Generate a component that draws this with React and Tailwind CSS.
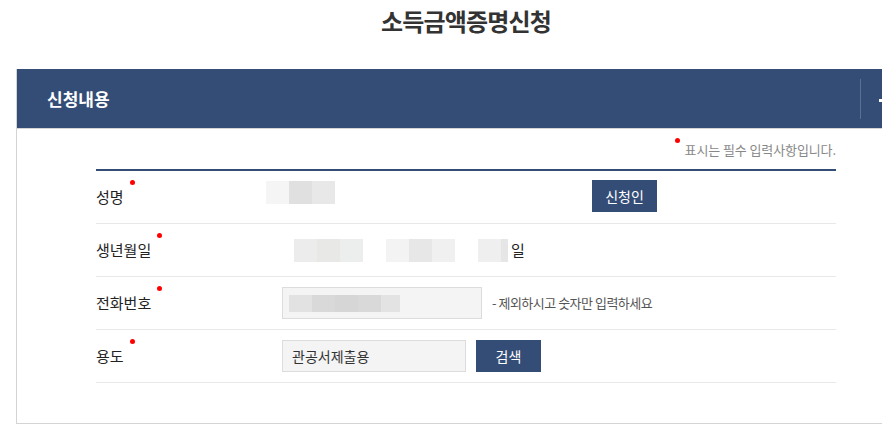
export default function App() {
  const font = { fontFamily: '"Noto Sans CJK KR", "Noto Sans", sans-serif' };

  const Dot = () => (
    <span className="absolute -right-[11px] -top-[6px] h-[5px] w-[5px] rounded-full bg-[#ff0000]" />
  );

  const Label = ({ children }) => (
    <div className="flex w-[170px] items-center text-[15px] text-[#222]">
      <span className="relative">
        {children}
        <Dot />
      </span>
    </div>
  );

  const Blur = ({ colors }) => (
    <div className="flex h-[23px]">
      {colors.map((c, i) => (
        <div key={i} className="h-[23px] w-[23px]" style={{ backgroundColor: c }} />
      ))}
    </div>
  );

  return (
    <div className="h-[430px] w-[882px] overflow-hidden bg-white" style={font}>
      <div className="ml-[16px] w-[900px]">
        <h1 className="pt-[4px] text-center text-[24px] font-bold leading-[34px] tracking-[-0.8px] text-[#333]">
          소득금액증명신청
        </h1>

        <div className="mt-[31px] border-b border-l border-[#d4d4d4]">
          <div className="flex h-[60px] items-center border-b border-[#d4d4d4] bg-[#344d77]">
            <h2 className="flex-1 pl-[30px] text-[17px] font-bold text-white">신청내용</h2>
            <div className="flex h-[40px] w-[56px] items-center border-l border-[#5a6f93] pl-[18px]">
              <span className="mt-[4px] h-[3px] w-[3px] bg-white" />
            </div>
          </div>

          <div className="pb-[40px] pl-[79px] pr-[80px]">
            <p className="flex h-[40px] items-center justify-end pt-[1px] text-[13px] tracking-[-0.1px] text-[#888]">
              <span className="relative">
                <span className="absolute -left-[10px] -top-[2px] h-[5px] w-[5px] rounded-full bg-[#ff0000]" />
                표시는 필수 입력사항입니다.
              </span>
            </p>

            <div className="border-t-2 border-[#344d77]">
              <div className="flex h-[53px] items-center border-b border-[#e8e8e8]">
                <Label>성명</Label>
                <div className="-mt-[10px]">
                  <Blur colors={["#f5f5f5", "#e0e0e0", "#e8e8e8"]} />
                </div>
                <button className="ml-[257px] -mt-[2px] h-[32px] w-[65px] bg-[#344d77] text-[14px] text-white">
                  신청인
                </button>
              </div>

              <div className="flex h-[53px] items-center border-b border-[#e8e8e8]">
                <Label>생년월일</Label>
                <div className="ml-[28px] flex items-center">
                  <Blur colors={["#ececec", "#e8e8e6", "#eceded"]} />
                  <div className="ml-[23px]">
                    <Blur colors={["#f3f3f3", "#e7e7e7", "#f0f0f0"]} />
                  </div>
                  <div className="ml-[23px] flex h-[23px]">
                    <div className="h-[23px] w-[23px] bg-[#efefef]" />
                    <div className="h-[23px] w-[7px] bg-[#e6e6e6]" />
                  </div>
                  <span className="ml-[3px] text-[15px] text-[#222]">일</span>
                </div>
              </div>

              <div className="flex h-[53px] items-center border-b border-[#e8e8e8]">
                <Label>전화번호</Label>
                <div className="ml-[16px] flex h-[32px] w-[200px] items-center border border-[#dcdcdc] bg-[#f4f4f4] pl-[6px]">
                  <div className="flex h-[17px]">
                    <div className="h-[17px] w-[23px] bg-[#e2e2e2]" />
                    <div className="h-[17px] w-[23px] bg-[#d9d9d9]" />
                    <div className="h-[17px] w-[23px] bg-[#d6d6d6]" />
                    <div className="h-[17px] w-[23px] bg-[#d9d9d9]" />
                    <div className="h-[17px] w-[19px] bg-[#e3e3e3]" />
                  </div>
                </div>
                <span className="ml-[10px] text-[13px] tracking-[-0.5px] text-[#555]">- 제외하시고 숫자만 입력하세요</span>
              </div>

              <div className="flex h-[53px] items-center border-b border-[#e8e8e8]">
                <Label>용도</Label>
                <div className="ml-[16px] flex h-[32px] w-[184px] items-center border border-[#dcdcdc] bg-[#f4f4f4] pl-[9px] text-[14px] text-[#333]">
                  관공서제출용
                </div>
                <button className="ml-[10px] h-[32px] w-[65px] bg-[#344d77] text-[14px] text-white">검색</button>
              </div>
            </div>
          </div>
        </div>
      </div>
    </div>
  );
}
